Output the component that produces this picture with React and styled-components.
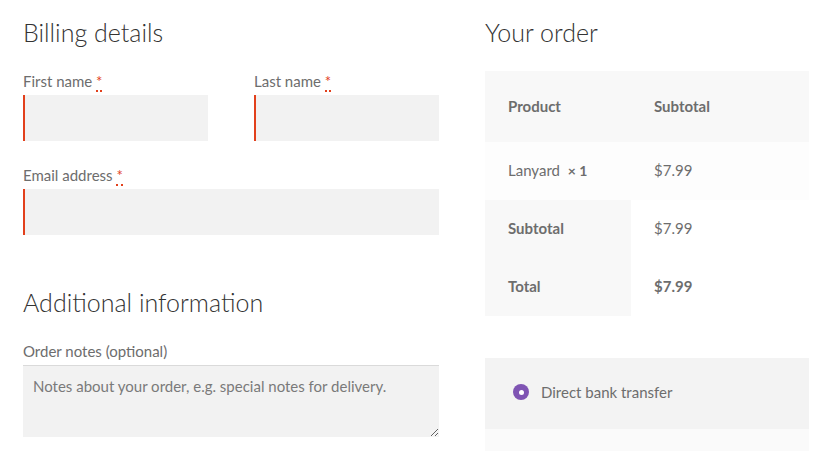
import React from 'react';
import styled, { createGlobalStyle } from 'styled-components';

const GlobalStyle = createGlobalStyle`
  html, body {
    margin: 0;
    padding: 0;
    background: #fff;
  }
  body {
    font-family: "Lato", "Open Sans", sans-serif;
    color: #6d6d6d;
    font-size: 15px;
  }
`;

const Page = styled.div`
  display: grid;
  grid-template-columns: 416px 324px;
  column-gap: 46px;
  padding: 0 0 0 23px;
  height: 451px;
  overflow: hidden;
`;

const Column = styled.div`
  display: flex;
  flex-direction: column;
`;

const Heading = styled.h3`
  margin: ${p => p.$top || 0}px 0 0;
  height: ${p => p.$h || 50}px;
  font-size: 25px;
  font-weight: 300;
  color: #333;
  line-height: 1;
  padding-top: 20px;
  box-sizing: border-box;
`;

const FieldRow = styled.div`
  display: grid;
  grid-template-columns: ${p => (p.$split ? 'minmax(0, 1fr) minmax(0, 1fr)' : 'minmax(0, 1fr)')};
  column-gap: 46px;
  margin-bottom: 22px;
`;

const Field = styled.div`
  display: flex;
  flex-direction: column;
  min-width: 0;
`;

const Label = styled.label`
  font-size: 15px;
  line-height: 24px;
  height: 24px;
  margin-bottom: 2px;
  color: #6d6d6d;
`;

const Required = styled.abbr`
  color: #e2401c;
  text-decoration: none;
  border-bottom: 2px dotted #e2401c;
  line-height: 1;
`;

const Input = styled.input`
  width: 100%;
  height: 46px;
  box-sizing: border-box;
  border: 0;
  border-left: 2px solid #e2401c;
  background: #f2f2f2;
  outline: none;
  padding: 0 10px;
  font-family: inherit;
  font-size: 15px;
`;

const TextArea = styled.textarea`
  width: 100%;
  height: 72px;
  box-sizing: border-box;
  border: 0;
  border-top: 1px solid #dadada;
  background: #f2f2f2;
  padding: 11px 10px;
  font-family: inherit;
  font-size: 15px;
  color: #6d6d6d;
  outline: none;
  &::placeholder {
    color: #7a7a7a;
  }
`;

const Table = styled.table`
  border-collapse: collapse;
  width: 324px;
  margin-top: 21px;
  font-size: 15px;
  table-layout: fixed;
`;

const Row = styled.tr`
  background: ${p => p.$bg || 'transparent'};
  height: ${p => p.$h || 58}px;
`;

const Cell = styled.td`
  padding: 0 0 2px 23px;
  text-align: left;
  font-weight: ${p => (p.$bold ? 700 : 400)};
  background: ${p => p.$bg || 'transparent'};
  color: #6d6d6d;
  width: ${p => p.$w || 'auto'};
`;

const Qty = styled.strong`
  font-weight: 700;
  margin-left: 4px;
  font-size: 14px;
`;

const Payment = styled.div`
  margin-top: 42px;
  background: #f3f3f3;
  height: 71px;
  box-sizing: border-box;
  display: flex;
  align-items: center;
  padding: 0 0 3px 28px;
  gap: 12px;
  font-size: 15px;
`;

const PaymentMore = styled.div`
  background: #fafafa;
  flex: 1;
`;

const Radio = styled.span`
  width: 16px;
  height: 16px;
  border-radius: 50%;
  background: #7f54b3;
  display: flex;
  align-items: center;
  justify-content: center;
  &::after {
    content: '';
    width: 5px;
    height: 5px;
    border-radius: 50%;
    background: #fff;
  }
`;

export default function App() {
  return (
    <>
      <GlobalStyle />
      <Page>
        <Column>
          <Heading $h={69}>Billing details</Heading>
          <FieldRow $split>
            <Field>
              <Label>First name <Required>*</Required></Label>
              <Input />
            </Field>
            <Field>
              <Label>Last name <Required>*</Required></Label>
              <Input />
            </Field>
          </FieldRow>
          <Field>
            <Label>Email address <Required>*</Required></Label>
            <Input />
          </Field>
          <Heading $top={35} $h={69}>Additional information</Heading>
          <Field>
            <Label>Order notes (optional)</Label>
            <TextArea placeholder="Notes about your order, e.g. special notes for delivery." />
          </Field>
        </Column>
        <Column>
          <Heading $h={50}>Your order</Heading>
          <Table>
            <tbody>
              <Row $bg="#f8f8f8" $h={71}>
                <Cell $bold $w="123px">Product</Cell>
                <Cell $bold>Subtotal</Cell>
              </Row>
              <Row $bg="#fdfdfd">
                <Cell>Lanyard <Qty>× 1</Qty></Cell>
                <Cell>$7.99</Cell>
              </Row>
              <Row>
                <Cell $bold $bg="#f8f8f8">Subtotal</Cell>
                <Cell>$7.99</Cell>
              </Row>
              <Row>
                <Cell $bold $bg="#f8f8f8">Total</Cell>
                <Cell $bold>$7.99</Cell>
              </Row>
            </tbody>
          </Table>
          <Payment>
            <Radio />
            <span>Direct bank transfer</span>
          </Payment>
          <PaymentMore />
        </Column>
      </Page>
    </>
  );
}
